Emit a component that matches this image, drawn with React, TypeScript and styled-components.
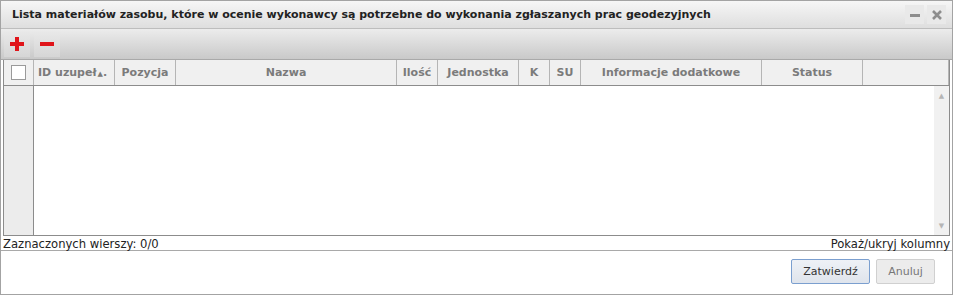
import React from "react"
import styled, { createGlobalStyle } from "styled-components"

const Global = createGlobalStyle`
  html, body { margin: 0; padding: 0; background: #fff; }
  body { font-family: "DejaVu Sans", Verdana, sans-serif; }
`

const Window = styled.div`
  box-sizing: border-box;
  width: 953px;
  height: 295px;
  border: 1px solid #a3a3a3;
  background: #fff;
  display: flex;
  flex-direction: column;
`

const TitleBar = styled.div`
  height: 27px;
  display: flex;
  align-items: center;
  justify-content: space-between;
  padding: 0 6px 0 11px;
  background: linear-gradient(#f6f6f6, #dedede);
  border-bottom: 1px solid #bdbdbd;
`

const Title = styled.div`
  font-size: 11px;
  font-weight: bold;
  color: #222;
`

const WinButtons = styled.div`
  display: flex;
  gap: 3px;
`

const WinButton = styled.div`
  width: 19px;
  height: 19px;
  background: #e9e9e9;
  display: flex;
  align-items: center;
  justify-content: center;
`

const Toolbar = styled.div`
  height: 30px;
  display: flex;
  align-items: center;
  gap: 4px;
  padding: 0 3px;
  background: linear-gradient(#ececec, #c9c9c9);
  border-bottom: 1px solid #a9a9a9;
`

const ToolButton = styled.div`
  width: 26px;
  height: 25px;
  background: linear-gradient(#e8e8e8, #d6d6d6);
  display: flex;
  align-items: center;
  justify-content: center;
`

const Grid = styled.div`
  margin: 0 2px 0 2px;
  border-left: 1px solid #8c8c8c;
  border-right: 1px solid #8c8c8c;
  border-bottom: 1px solid #8c8c8c;
  display: flex;
  flex-direction: column;
`

const HeaderRow = styled.div`
  height: 25px;
  display: flex;
  background: #f0f0f0;
  border-bottom: 1px solid #8c8c8c;
`

const HeadCell = styled.div<{ $w?: number; $left?: boolean }>`
  box-sizing: border-box;
  ${p => (p.$w ? `width: ${p.$w}px;` : "flex: 1;")}
  border-right: 1px solid #b5b5b5;
  display: flex;
  align-items: center;
  justify-content: ${p => (p.$left ? "flex-start" : "center")};
  padding-left: ${p => (p.$left ? "4px" : "0")};
  font-size: 11px;
  font-weight: bold;
  color: #7b7b7b;
  white-space: nowrap;
  overflow: hidden;
`

const CheckBox = styled.div`
  width: 13px;
  height: 13px;
  background: #fff;
  border: 1px solid #9a9a9a;
`

const SortMark = styled.span`
  font-size: 7px;
  margin: 3px 0 0 1px;
`

const Body = styled.div`
  height: 149px;
  display: flex;
`

const SideCol = styled.div`
  width: 29px;
  background: #ececec;
  border-right: 1px solid #8c8c8c;
`

const Rows = styled.div`
  flex: 1;
  background: #fff;
`

const Scroll = styled.div`
  width: 15px;
  background: #f1f1f1;
  display: flex;
  flex-direction: column;
  justify-content: space-between;
  align-items: center;
  padding: 6px 0 5px;
  color: #b5b5b5;
  font-size: 7px;
`

const Status = styled.div`
  height: 13px;
  display: flex;
  justify-content: space-between;
  align-items: center;
  padding: 0 2px 0 2px;
  font-size: 11.6px;
  color: #222;
  border-bottom: 1px solid #a9a9a9;
  margin-top: 1px;
`

const Footer = styled.div`
  flex: 1;
  display: flex;
  justify-content: flex-end;
  align-items: center;
  gap: 6px;
  padding: 0 17px 2px 0;
`

const Btn = styled.button<{ $primary?: boolean; $w: number }>`
  box-sizing: border-box;
  width: ${p => p.$w}px;
  height: 25px;
  padding: 0;
  font-family: "DejaVu Sans", Verdana, sans-serif;
  font-size: 11px;
  color: ${p => (p.$primary ? "#333" : "#777")};
  background: ${p => (p.$primary ? "linear-gradient(#eef1f6, #dfe4ec)" : "#ececec")};
  border: 1px solid ${p => (p.$primary ? "#7b9fcf" : "#d0d0d0")};
  border-radius: 2px;
`

const cols: { label: string; w?: number }[] = [
  { label: "Pozycja", w: 61 },
  { label: "Nazwa", w: 221 },
  { label: "Ilość", w: 41 },
  { label: "Jednostka", w: 81 },
  { label: "K", w: 31 },
  { label: "SU", w: 31 },
  { label: "Informacje dodatkowe", w: 181 },
  { label: "Status", w: 101 },
  { label: "" },
]

export default function App() {
  return (
    <>
      <Global />
      <Window>
        <TitleBar>
          <Title>Lista materiałów zasobu, które w ocenie wykonawcy są potrzebne do wykonania zgłaszanych prac geodezyjnych</Title>
          <WinButtons>
            <WinButton>
              <svg width="10" height="10" viewBox="0 0 10 10"><rect x="0" y="4" width="10" height="3" fill="#8d8d8d" /></svg>
            </WinButton>
            <WinButton>
              <svg width="10" height="10" viewBox="0 0 10 10"><path d="M1 1 L9 9 M9 1 L1 9" stroke="#8d8d8d" strokeWidth="2.6" /></svg>
            </WinButton>
          </WinButtons>
        </TitleBar>
        <Toolbar>
          <ToolButton>
            <svg width="14" height="14" viewBox="0 0 14 14"><path d="M5 0h4v5h5v4H9v5H5V9H0V5h5z" fill="#e0141a" /></svg>
          </ToolButton>
          <ToolButton>
            <svg width="14" height="14" viewBox="0 0 14 14"><rect x="0" y="5" width="14" height="4" fill="#e0141a" /></svg>
          </ToolButton>
        </Toolbar>
        <Grid>
          <HeaderRow>
            <HeadCell $w={30}><CheckBox /></HeadCell>
            <HeadCell $w={81} $left>ID uzupeł<SortMark>▲</SortMark>.</HeadCell>
            {cols.map((c, i) => (
              <HeadCell key={i} $w={c.w}>{c.label}</HeadCell>
            ))}
          </HeaderRow>
          <Body>
            <SideCol />
            <Rows />
            <Scroll>
              <span>▲</span>
              <span>▼</span>
            </Scroll>
          </Body>
        </Grid>
        <Status>
          <span>Zaznaczonych wierszy: 0/0</span>
          <span>Pokaż/ukryj kolumny</span>
        </Status>
        <Footer>
          <Btn $primary $w={79}>Zatwierdź</Btn>
          <Btn $w={59}>Anuluj</Btn>
        </Footer>
      </Window>
    </>
  )
}
